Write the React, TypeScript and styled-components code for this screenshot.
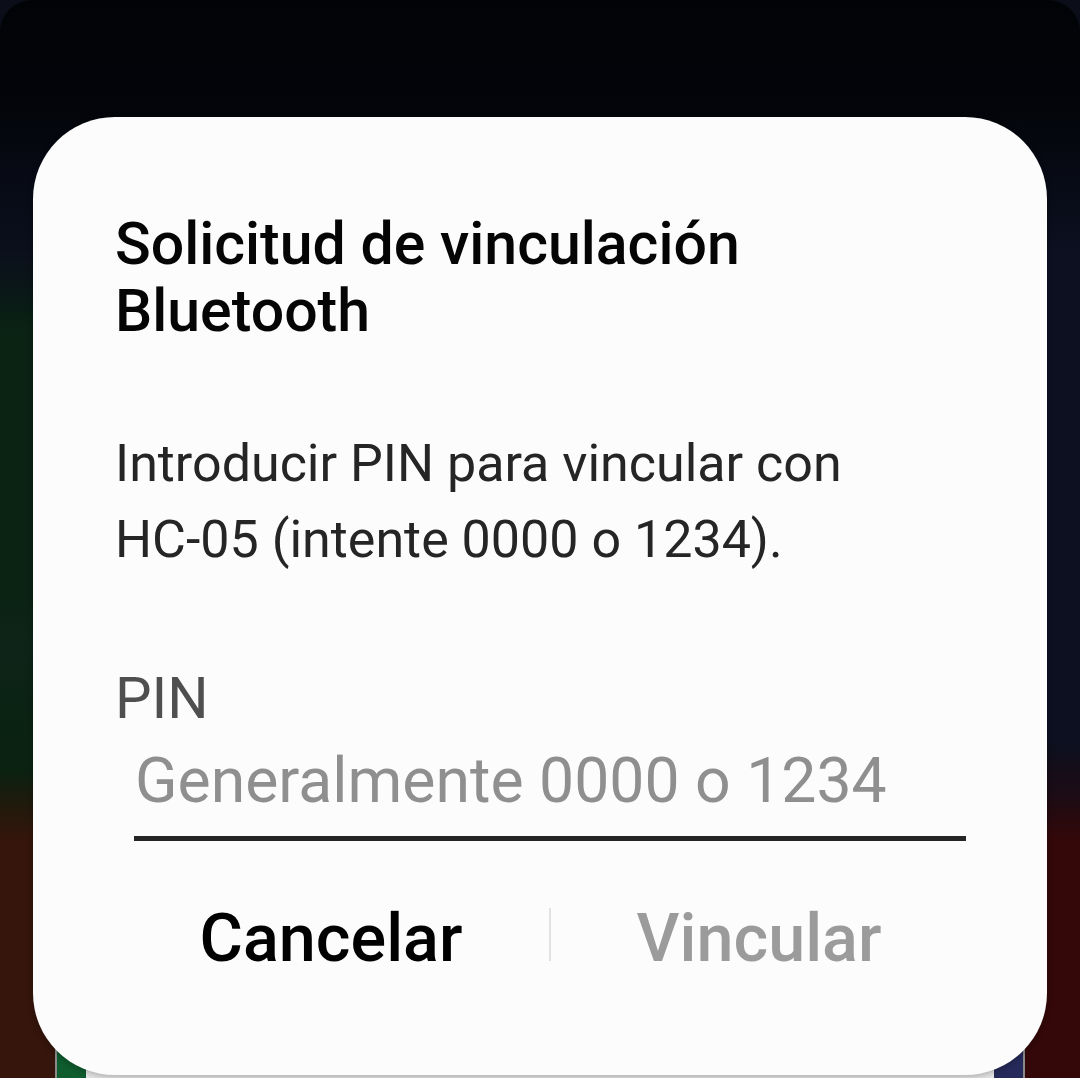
import React from "react";
import styled, { createGlobalStyle } from "styled-components";

const Global = createGlobalStyle`
  html, body {
    margin: 0;
    padding: 0;
    background: #0b0e18;
  }
  body {
    font-family: Roboto, "Noto Sans", "Liberation Sans", sans-serif;
  }
`;

const Screen = styled.div`
  position: relative;
  width: 1080px;
  height: 1078px;
  overflow: hidden;
  border-radius: 32px 32px 0 0;
  display: flex;
  flex-direction: column;
  background-image:
    linear-gradient(
      to bottom,
      #020306 0px,
      #03050a 110px,
      #070a14 170px,
      #0b0f1c 250px,
      #0a1a16 300px,
      #0a2313 330px,
      #0a2313 600px,
      #0f2419 650px,
      #0a2313 700px,
      #0b2211 770px,
      #201a0c 805px,
      #35150c 840px,
      #35150c 100%
    ),
    linear-gradient(
      to bottom,
      #020306 0px,
      #03050a 110px,
      #070a14 170px,
      #0c1020 250px,
      #0c1020 740px,
      #1e0b14 800px,
      #340808 840px,
      #340808 100%
    );
  background-size: 50% 100%, 50% 100%;
  background-position: left top, right top;
  background-repeat: no-repeat;
`;

const BackCard = styled.div`
  margin: auto 55px 0 55px;
  height: 80px;
  display: flex;
  border-left: 2px solid #8a8a8a;
  border-right: 2px solid #8a8a8a;
  background: #e4e4e4;
`;

const Stripe = styled.div<{ $color: string }>`
  width: 29px;
  background: ${(p) => p.$color};
`;

const CardBody = styled.div`
  flex: 1;
  background: #e6e6e6;
`;

const Dialog = styled.div`
  position: absolute;
  top: 117px;
  left: 33px;
  width: 1014px;
  box-sizing: border-box;
  padding: 93px 80px 98px 80px;
  background: #fcfcfc;
  border-radius: 82px;
  display: flex;
  flex-direction: column;
  box-shadow: 0 2px 6px rgba(0, 0, 0, 0.25);
`;

const Title = styled.h1`
  margin: 0;
  font-size: 59px;
  line-height: 67px;
  font-weight: 500;
  color: #050505;
  padding-left: 2px;
`;

const Message = styled.p`
  margin: 82px 0 0 0;
  font-size: 52px;
  line-height: 76px;
  font-weight: 400;
  color: #252525;
  padding-left: 2px;
`;

const FieldLabel = styled.div`
  margin-top: 86px;
  font-size: 58px;
  line-height: 68px;
  font-weight: 400;
  color: #4f4f4f;
  padding-left: 2px;
`;

const Input = styled.div`
  margin: 13px 1px 0 21px;
  height: 91px;
  border-bottom: 5px solid #252525;
  font-size: 62.5px;
  line-height: 72px;
  color: #8f8f8f;
  padding-left: 1px;
`;

const ButtonRow = styled.div`
  margin: 58px 0 0 10px;
  display: flex;
  align-items: center;
`;

const ActionButton = styled.button<{ $disabled?: boolean }>`
  flex: 1;
  background: none;
  border: none;
  padding: 0;
  font-family: Roboto, "Noto Sans", "Liberation Sans", sans-serif;
  font-size: 66.5px;
  line-height: 78px;
  font-weight: 500;
  color: ${(p) => (p.$disabled ? "#9b9b9b" : "#000000")};
  text-align: center;
  cursor: pointer;
`;

const CancelButton = styled(ActionButton)`
  padding-right: 10px;
`;

const Divider = styled.div`
  width: 2px;
  height: 53px;
  margin-top: -8px;
  background: #e2e2e2;
`;

export default function App() {
  return (
    <>
      <Global />
      <Screen>
        <BackCard>
          <Stripe $color="#0f5c2e" />
          <CardBody />
          <Stripe $color="#262a5a" />
        </BackCard>
        <Dialog role="dialog">
          <Title>
            Solicitud de vinculación
            <br />
            Bluetooth
          </Title>
          <Message>
            Introducir PIN para vincular con
            <br />
            HC-05 (intente 0000 o 1234).
          </Message>
          <FieldLabel>PIN</FieldLabel>
          <Input>Generalmente 0000 o 1234</Input>
          <ButtonRow>
            <CancelButton>Cancelar</CancelButton>
            <Divider />
            <ActionButton $disabled>Vincular</ActionButton>
          </ButtonRow>
        </Dialog>
      </Screen>
    </>
  );
}
